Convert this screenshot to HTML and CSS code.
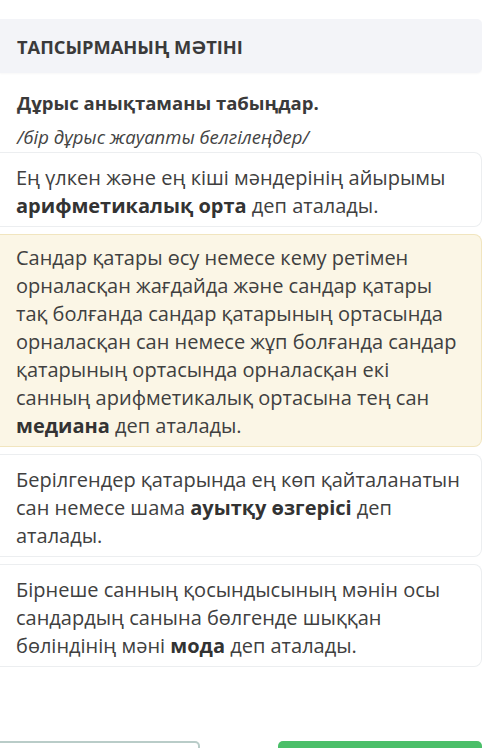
FILE: index.html
```html
<!DOCTYPE html>
<html lang="kk">
<head>
<meta charset="utf-8">
<link rel="stylesheet" href="styles.css">
</head>
<body>
<div class="page">
  <div class="task-header">ТАПСЫРМАНЫҢ МӘТІНІ</div>
  <div class="question">Дұрыс анықтаманы табыңдар.</div>
  <div class="hint">/бір дұрыс жауапты белгілеңдер/</div>
  <div class="options">
    <div class="option">Ең үлкен және ең кіші мәндерінің айырымы <b>арифметикалық орта</b> деп аталады.</div>
    <div class="option selected">Сандар қатары өсу немесе кему ретімен орналасқан жағдайда және сандар қатары тақ болғанда сандар қатарының ортасында орналасқан сан немесе жұп болғанда сандар қатарының ортасында орналасқан екі санның арифметикалық ортасына тең сан <b>медиана</b> деп аталады.</div>
    <div class="option">Берілгендер қатарында ең көп қайталанатын сан немесе шама <b>ауытқу өзгерісі</b> деп аталады.</div>
    <div class="option">Бірнеше санның қосындысының мәнін осы сандардың санына бөлгенде шыққан бөліндінің мәні <b>мода</b> деп аталады.</div>
  </div>
  <div class="actions">
    <div class="btn btn-outline"></div>
    <div class="btn btn-green"></div>
  </div>
</div>
</body>
</html>
```
FILE: styles.css
```css
html, body {
  margin: 0;
  padding: 0;
  background: #ffffff;
}
body {
  font-family: "Open Sans", "Noto Sans", sans-serif;
  color: #3b3b3b;
  overflow: hidden;
}
.page {
  width: 482px;
  height: 748px;
  box-sizing: border-box;
  overflow: hidden;
  padding-top: 19px;
}
.task-header {
  background: #f3f4f8;
  border-radius: 0 5px 5px 0;
  height: 54px;
  box-sizing: border-box;
  padding: 0 17px;
  display: flex;
  align-items: center;
  font-weight: 700;
  font-size: 18.3px;
  color: #3a3a3a;
  box-shadow: 0 1px 2px rgba(0,0,0,0.03);
}
.question {
  margin-top: 17px;
  padding-left: 17px;
  font-weight: 700;
  font-size: 18.5px;
  line-height: 26px;
  color: #3a3a3a;
}
.hint {
  margin-top: 9px;
  padding-left: 17px;
  font-style: italic;
  font-size: 18.5px;
  line-height: 24px;
  color: #444;
}
.options {
  margin-top: 3px;
  display: flex;
  flex-direction: column;
  gap: 7px;
}
.option {
  border: 1px solid #eceef0;
  border-left: none;
  border-radius: 0 8px 8px 0;
  padding: 11px 17px 6px 16px;
  font-size: 20px;
  line-height: 28px;
  color: #404040;
  background: #fff;
}
.option b {
  font-weight: 700;
  color: #333;
}
.option.selected {
  background: #fbf6e6;
  border-color: #f1e5bf;
  padding-top: 9px;
}
.actions {
  margin-top: 74px;
  display: flex;
  justify-content: space-between;
}
.btn {
  height: 50px;
  width: 204px;
  box-sizing: border-box;
  border-radius: 5px;
}
.btn-outline {
  width: 200px;
  border: 2px solid #b9ccc8;
  border-left: none;
  border-radius: 0 5px 5px 0;
}
.btn-green {
  background: #4bbf69;
}
```
